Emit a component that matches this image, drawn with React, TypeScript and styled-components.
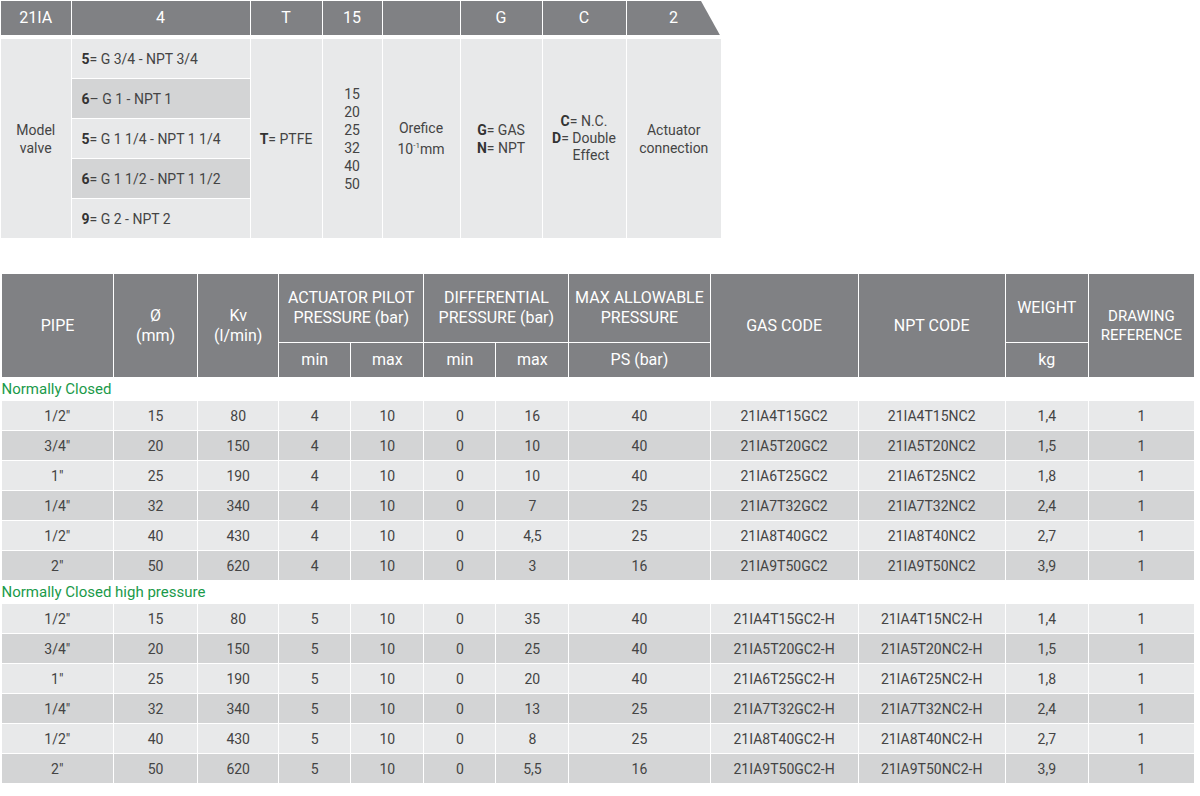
import React from "react";
import styled, { createGlobalStyle } from "styled-components";

const Global = createGlobalStyle`
  body { margin: 0; background: #fff; font-family: Roboto, "Open Sans", sans-serif; color: #444; }
`;

const Page = styled.div`
  padding: 1px 0 0 1px;
  display: flex;
  flex-direction: column;
  gap: 34px;
`;

const Table = styled.table<{ $w: number }>`
  width: ${(p) => p.$w}px;
  border-collapse: collapse;
  table-layout: fixed;
`;

const Th = styled.th<{ $h?: number; $cut?: boolean }>`
  background: #808184;
  color: #fff;
  font-weight: 400;
  font-size: 16px;
  line-height: 20px;
  height: ${(p) => p.$h ?? 34}px;
  padding: 0 2px;
  border: 1px solid #fff;
  text-align: center;
  ${(p) => (p.$cut ? "clip-path: polygon(0 0, calc(100% - 20px) 0, 100% 100%, 0 100%);" : "")}
`;

const TopHead = styled.tr`
  th { border-bottom: 4px solid #fff; border-top: 0; }
  th:first-child { border-left: 0; }
`;

const Td = styled.td<{ $dark?: boolean; $left?: boolean; $h?: number }>`
  background: ${(p) => (p.$dark ? "#d3d4d5" : "#e8e9ea")};
  border: 1px solid #fff;
  font-size: 14px;
  line-height: 18px;
  text-align: ${(p) => (p.$left ? "left" : "center")};
  padding: ${(p) => (p.$left ? "0 0 0 10px" : "0")};
  height: ${(p) => p.$h ?? 29}px;
  color: #444;
  white-space: nowrap;
  b { font-weight: 700; color: #333; }
  &:first-child { border-left: 0; }
`;

const Section = styled.td`
  color: #1a9a4a;
  font-size: 15px;
  height: 22px;
  padding: 0;
  border: 0;
  text-align: left;
  line-height: 22px;
`;

const topCols = [70, 179, 72, 60, 78, 82, 84, 95];
const botCols = [112, 84, 81, 72, 73, 72, 73, 141, 148, 147, 83, 106];

const codes = [
  ["1/2″", "15", "80", "16", "40", "21IA4T15GC2", "21IA4T15NC2", "1,4"],
  ["3/4″", "20", "150", "10", "40", "21IA5T20GC2", "21IA5T20NC2", "1,5"],
  ["1″", "25", "190", "10", "40", "21IA6T25GC2", "21IA6T25NC2", "1,8"],
  ["1/4″", "32", "340", "7", "25", "21IA7T32GC2", "21IA7T32NC2", "2,4"],
  ["1/2″", "40", "430", "4,5", "25", "21IA8T40GC2", "21IA8T40NC2", "2,7"],
  ["2″", "50", "620", "3", "16", "21IA9T50GC2", "21IA9T50NC2", "3,9"],
];
const hp = ["35", "25", "20", "13", "8", "5,5"];

function Rows({ pilot, high }: { pilot: string; high: boolean }) {
  return (
    <>
      {codes.map((r, i) => {
        const d = i % 2 === 1;
        const sfx = high ? "-H" : "";
        return (
          <tr key={i}>
            <Td $dark={d}>{r[0]}</Td>
            <Td $dark={d}>{r[1]}</Td>
            <Td $dark={d}>{r[2]}</Td>
            <Td $dark={d}>{pilot}</Td>
            <Td $dark={d}>10</Td>
            <Td $dark={d}>0</Td>
            <Td $dark={d}>{high ? hp[i] : r[3]}</Td>
            <Td $dark={d}>{r[4]}</Td>
            <Td $dark={d}>{r[5] + sfx}</Td>
            <Td $dark={d}>{r[6] + sfx}</Td>
            <Td $dark={d}>{r[7]}</Td>
            <Td $dark={d}>1</Td>
          </tr>
        );
      })}
    </>
  );
}

export default function App() {
  const opts: [string, string, boolean][] = [
    ["5", "= G 3/4 - NPT 3/4", false],
    ["6", "– G 1 - NPT 1", true],
    ["5", "= G 1 1/4 - NPT 1 1/4", false],
    ["6", "= G 1 1/2 - NPT 1 1/2", true],
    ["9", "= G 2 - NPT 2", false],
  ];
  return (
    <Page>
      <Global />
      <Table $w={720}>
        <colgroup>{topCols.map((w, i) => <col key={i} style={{ width: w }} />)}</colgroup>
        <thead>
          <TopHead>
            <Th>21IA</Th><Th>4</Th><Th>T</Th><Th>15</Th><Th></Th><Th>G</Th><Th>C</Th><Th $cut>2</Th>
          </TopHead>
        </thead>
        <tbody>
          {opts.map((o, i) => (
            <tr key={i}>
              {i === 0 && (
                <>
                  <Td rowSpan={5} style={{ whiteSpace: "normal" }}>Model<br />valve</Td>
                </>
              )}
              <Td $left $dark={o[2]} $h={39}><b>{o[0]}</b>{o[1]}</Td>
              {i === 0 && (
                <>
                  <Td rowSpan={5}><b>T</b>= PTFE</Td>
                  <Td rowSpan={5}>15<br />20<br />25<br />32<br />40<br />50</Td>
                  <Td rowSpan={5}>Orefice<br />10<sup style={{ fontSize: 8 }}>-1</sup>mm</Td>
                  <Td rowSpan={5}><b>G</b>= GAS<br /><b>N</b>= NPT</Td>
                  <Td rowSpan={5} style={{ lineHeight: "17px" }}><b>C</b>= N.C.<br /><b>D</b>= Double<br />&nbsp;&nbsp;&nbsp;&nbsp;Effect</Td>
                  <Td rowSpan={5} style={{ borderRight: 0 }}>Actuator<br />connection</Td>
                </>
              )}
            </tr>
          ))}
        </tbody>
      </Table>

      <Table $w={1194}>
        <colgroup>{botCols.map((w, i) => <col key={i} style={{ width: w }} />)}</colgroup>
        <thead>
          <tr>
            <Th rowSpan={2}>PIPE</Th>
            <Th rowSpan={2}>Ø<br />(mm)</Th>
            <Th rowSpan={2}>Kv<br />(l/min)</Th>
            <Th colSpan={2} $h={68}>ACTUATOR PILOT<br />PRESSURE (bar)</Th>
            <Th colSpan={2}>DIFFERENTIAL<br />PRESSURE (bar)</Th>
            <Th>MAX ALLOWABLE<br />PRESSURE</Th>
            <Th rowSpan={2}>GAS CODE</Th>
            <Th rowSpan={2}>NPT CODE</Th>
            <Th>WEIGHT</Th>
            <Th rowSpan={2} style={{ fontSize: 15, lineHeight: "19px" }}>DRAWING<br />REFERENCE</Th>
          </tr>
          <tr>
            <Th $h={34}>min</Th><Th>max</Th><Th>min</Th><Th>max</Th><Th>PS (bar)</Th><Th>kg</Th>
          </tr>
        </thead>
        <tbody>
          <tr><Section colSpan={12}>Normally Closed</Section></tr>
          <Rows pilot="4" high={false} />
          <tr><Section colSpan={12}>Normally Closed high pressure</Section></tr>
          <Rows pilot="5" high={true} />
        </tbody>
      </Table>
    </Page>
  );
}
